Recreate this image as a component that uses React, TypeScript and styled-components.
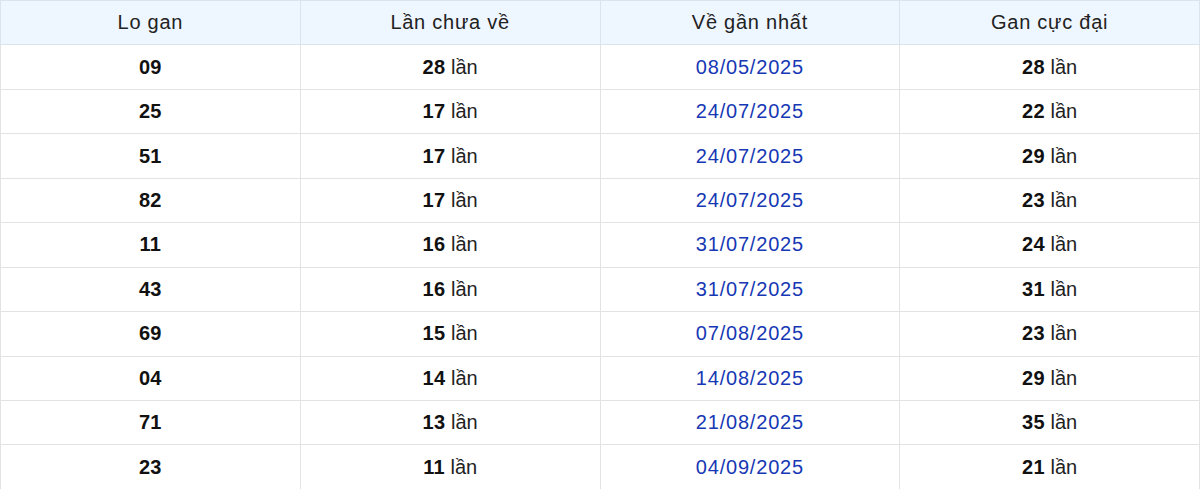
import styled, { createGlobalStyle } from "styled-components";

const GlobalStyle = createGlobalStyle`
    html, body {
        margin: 0;
        padding: 0;
        background: #ffffff;
    }
    body {
        font-family: "Liberation Sans", Arial, sans-serif;
    }
`;

type Row = {
    number: string;
    missed: number;
    lastSeen: string;
    maxGap: number;
};

const rows: Row[] = [
    { number: "09", missed: 28, lastSeen: "08/05/2025", maxGap: 28 },
    { number: "25", missed: 17, lastSeen: "24/07/2025", maxGap: 22 },
    { number: "51", missed: 17, lastSeen: "24/07/2025", maxGap: 29 },
    { number: "82", missed: 17, lastSeen: "24/07/2025", maxGap: 23 },
    { number: "11", missed: 16, lastSeen: "31/07/2025", maxGap: 24 },
    { number: "43", missed: 16, lastSeen: "31/07/2025", maxGap: 31 },
    { number: "69", missed: 15, lastSeen: "07/08/2025", maxGap: 23 },
    { number: "04", missed: 14, lastSeen: "14/08/2025", maxGap: 29 },
    { number: "71", missed: 13, lastSeen: "21/08/2025", maxGap: 35 },
    { number: "23", missed: 11, lastSeen: "04/09/2025", maxGap: 21 },
];

export default function App() {
    return (
        <>
            <GlobalStyle />
            <Table>
                <thead>
                    <HeadRow>
                        <HeadCell>Lo gan</HeadCell>
                        <HeadCell>Lần chưa về</HeadCell>
                        <HeadCell>Về gần nhất</HeadCell>
                        <HeadCell>Gan cực đại</HeadCell>
                    </HeadRow>
                </thead>
                <tbody>
                    {rows.map((row) => (
                        <BodyRow key={row.number}>
                            <Cell>
                                <Strong>{row.number}</Strong>
                            </Cell>
                            <Cell>
                                <Strong>{row.missed}</Strong> lần
                            </Cell>
                            <Cell $tone="date">{row.lastSeen}</Cell>
                            <Cell>
                                <Strong>{row.maxGap}</Strong> lần
                            </Cell>
                        </BodyRow>
                    ))}
                </tbody>
            </Table>
        </>
    );
}

const Table = styled.table`
    width: 1200px;
    border-collapse: collapse;
    table-layout: fixed;
    font-size: 20px;
    color: #222222;
`;

const HeadRow = styled.tr`
    height: 44.45px;
    background: #eef6ff;
`;

const BodyRow = styled.tr`
    height: 44.45px;
    background: #ffffff;
`;

const HeadCell = styled.th`
    font-weight: 400;
    text-align: center;
    padding: 0;
    letter-spacing: 0.75px;
    border: 1px solid #dde3ea;
    color: #222222;
`;

const Cell = styled.td<{ $tone?: "date" }>`
    text-align: center;
    padding: 0;
    border: 1px solid #e3e3e3;
    letter-spacing: ${(p) => (p.$tone === "date" ? "0.8px" : "normal")};
    color: ${(p) => (p.$tone === "date" ? "#1638b4" : "#222222")};
`;

const Strong = styled.b`
    font-weight: 700;
    color: #111111;
    letter-spacing: 0.3px;
`;
